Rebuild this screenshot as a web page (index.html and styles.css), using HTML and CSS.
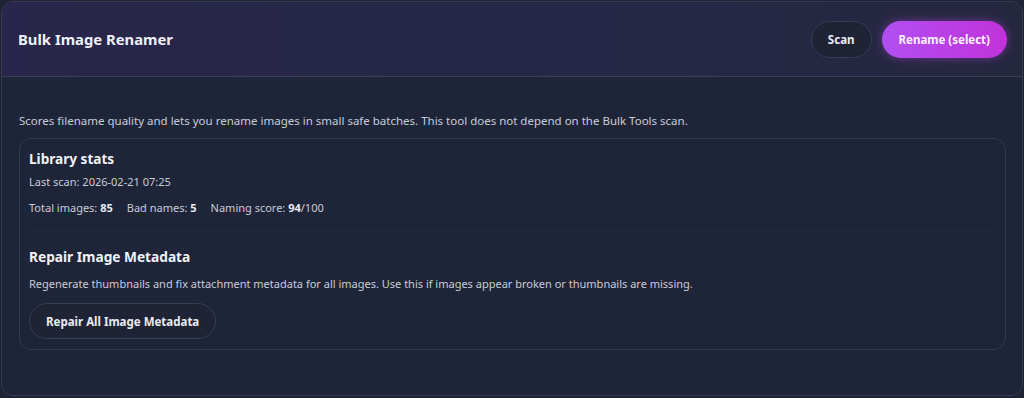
FILE: index.html
```html
<!DOCTYPE html>
<html lang="en">
<head>
<meta charset="utf-8">
<title>Bulk Image Renamer</title>
<link rel="stylesheet" href="styles.css">
</head>
<body>
<div class="panel">
  <header class="head">
    <h1 class="title">Bulk Image Renamer</h1>
    <div class="actions">
      <button class="btn btn-ghost">Scan</button>
      <button class="btn btn-primary">Rename (select)</button>
    </div>
  </header>
  <main class="body">
    <p class="intro">Scores filename quality and lets you rename images in small safe batches. This tool does not depend on the Bulk Tools scan.</p>
    <section class="card">
      <div class="block">
        <h2 class="subtitle">Library stats</h2>
        <p class="line">Last scan: 2026-02-21 07:25</p>
        <p class="line stats"><span>Total images: <b>85</b></span><span>Bad names: <b>5</b></span><span>Naming score: <b>94</b>/100</span></p>
      </div>
      <div class="block block-sep">
        <h2 class="subtitle">Repair Image Metadata</h2>
        <p class="line">Regenerate thumbnails and fix attachment metadata for all images. Use this if images appear broken or thumbnails are missing.</p>
        <button class="btn btn-ghost btn-repair">Repair All Image Metadata</button>
      </div>
    </section>
  </main>
</div>
</body>
</html>
```

FILE: styles.css
```css
* { box-sizing: border-box; }
html, body { margin: 0; padding: 0; background: #1e2436; }
body {
  font-family: "Noto Sans", "Open Sans", sans-serif;
  color: #e6e8f0;
  padding: 1px 1px 2px 1px;
  height: 398px;
}
.panel {
  height: 395px;
  border: 1px solid #333a52;
  border-radius: 12px;
  background: #1f2538;
  overflow: hidden;
}
.head {
  height: 75px;
  display: flex;
  align-items: center;
  justify-content: space-between;
  padding: 0 15px 0 16px;
  background: linear-gradient(90deg, #28264a 0%, #262847 60%, #25273f 100%);
  border-bottom: 1px solid #3a3f58;
}
.title {
  margin: 0;
  font-size: 14.8px;
  font-weight: 700;
  color: #eef0f8;
}
.actions { display: flex; gap: 10px; }
.btn {
  font-family: inherit;
  font-size: 11.5px;
  font-weight: 700;
  height: 37px;
  border-radius: 19px;
  padding: 0 16px;
  cursor: pointer;
}
.btn-ghost {
  background: #1e2436;
  border: 1px solid #363d55;
  color: #e9ebf3;
}
.btn-primary {
  background: linear-gradient(90deg, #b14ff2 0%, #c132d9 100%);
  border: none;
  color: #fbefff;
  padding: 0 17px;
  box-shadow: 0 0 10px rgba(190, 70, 240, 0.45);
}
.body { padding: 36px 16px 0 17px; }
.intro {
  margin: 0 0 10px 0;
  font-size: 11.5px;
  color: #c8ccda;
}
.card {
  border: 1px solid #323a50;
  border-radius: 12px;
  padding: 10px 9px 10px 9px;
  background: #1f2538;
}
.block-sep {
  margin-top: 15px;
  padding-top: 16px;
  border-top: 1px solid #252c41;
}
.subtitle {
  margin: 0 0 6px 0;
  font-size: 13.6px;
  font-weight: 700;
  color: #f0f2f8;
}
.block-sep .subtitle { margin-bottom: 10px; font-size: 13.7px; }
.line {
  margin: 0 0 11px 0;
  font-size: 11px;
  color: #c8ccda;
}
.block-sep .line { margin-bottom: 12px; }
.line b { color: #e8eaf2; font-weight: 700; }
.stats span { margin-right: 14px; }
.btn-repair { margin-top: 0; height: 36px; padding: 0 16px; }
```
